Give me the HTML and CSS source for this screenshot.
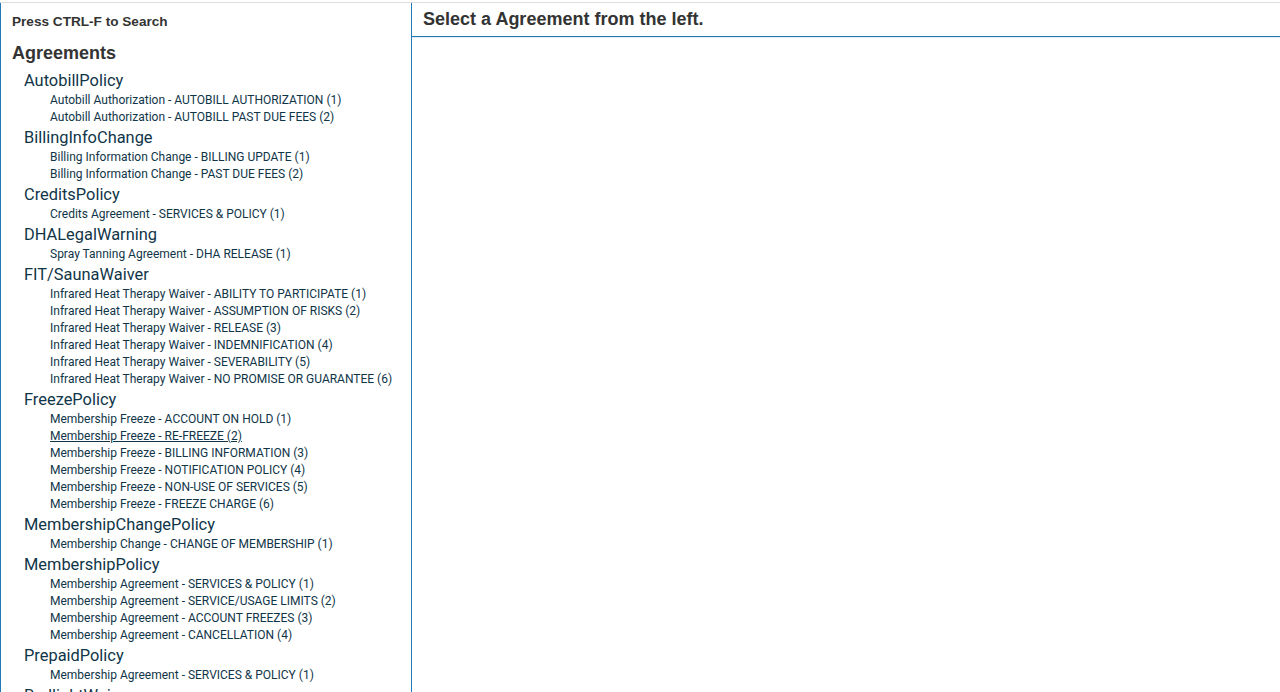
FILE: index.html
```html
<!DOCTYPE html>
<html>
<head>
    <meta charset="UTF-8">
    <title>Agreements</title>
    <link rel="stylesheet" href="styles.css">
</head>
<body>
    <div class="layout">
        <div class="sidebar">
            <div class="search-hint">Press CTRL-F to Search</div>
            <h2 class="list-title">Agreements</h2>

            <div class="group">
                <div class="group-name">AutobillPolicy</div>
                <a class="item" href="#">Autobill Authorization - AUTOBILL AUTHORIZATION (1)</a>
                <a class="item" href="#">Autobill Authorization - AUTOBILL PAST DUE FEES (2)</a>
            </div>
            <div class="group">
                <div class="group-name">BillingInfoChange</div>
                <a class="item" href="#">Billing Information Change - BILLING UPDATE (1)</a>
                <a class="item" href="#">Billing Information Change - PAST DUE FEES (2)</a>
            </div>
            <div class="group">
                <div class="group-name">CreditsPolicy</div>
                <a class="item" href="#">Credits Agreement - SERVICES &amp; POLICY (1)</a>
            </div>
            <div class="group">
                <div class="group-name">DHALegalWarning</div>
                <a class="item" href="#">Spray Tanning Agreement - DHA RELEASE (1)</a>
            </div>
            <div class="group">
                <div class="group-name">FIT/SaunaWaiver</div>
                <a class="item" href="#">Infrared Heat Therapy Waiver - ABILITY TO PARTICIPATE (1)</a>
                <a class="item" href="#">Infrared Heat Therapy Waiver - ASSUMPTION OF RISKS (2)</a>
                <a class="item" href="#">Infrared Heat Therapy Waiver - RELEASE (3)</a>
                <a class="item" href="#">Infrared Heat Therapy Waiver - INDEMNIFICATION (4)</a>
                <a class="item" href="#">Infrared Heat Therapy Waiver - SEVERABILITY (5)</a>
                <a class="item" href="#">Infrared Heat Therapy Waiver - NO PROMISE OR GUARANTEE (6)</a>
            </div>
            <div class="group">
                <div class="group-name">FreezePolicy</div>
                <a class="item" href="#">Membership Freeze - ACCOUNT ON HOLD (1)</a>
                <a class="item hover" href="#">Membership Freeze - RE-FREEZE (2)</a>
                <a class="item" href="#">Membership Freeze - BILLING INFORMATION (3)</a>
                <a class="item" href="#">Membership Freeze - NOTIFICATION POLICY (4)</a>
                <a class="item" href="#">Membership Freeze - NON-USE OF SERVICES (5)</a>
                <a class="item" href="#">Membership Freeze - FREEZE CHARGE (6)</a>
            </div>
            <div class="group">
                <div class="group-name">MembershipChangePolicy</div>
                <a class="item" href="#">Membership Change - CHANGE OF MEMBERSHIP (1)</a>
            </div>
            <div class="group">
                <div class="group-name">MembershipPolicy</div>
                <a class="item" href="#">Membership Agreement - SERVICES &amp; POLICY (1)</a>
                <a class="item" href="#">Membership Agreement - SERVICE/USAGE LIMITS (2)</a>
                <a class="item" href="#">Membership Agreement - ACCOUNT FREEZES (3)</a>
                <a class="item" href="#">Membership Agreement - CANCELLATION (4)</a>
            </div>
            <div class="group">
                <div class="group-name">PrepaidPolicy</div>
                <a class="item" href="#">Membership Agreement - SERVICES &amp; POLICY (1)</a>
            </div>
            <div class="group">
                <div class="group-name">RedlightWaiver</div>
                <a class="item" href="#">Red Light Therapy Waiver - RELEASE (1)</a>
            </div>
        </div>

        <div class="content">
            <div class="content-header">Select a Agreement from the left.</div>
        </div>
    </div>
</body>
</html>
```

FILE: styles.css
```css
html, body {
    margin: 0;
    height: 100%;
    overflow: hidden;
}

body {
    padding-top: 2px;
    box-sizing: border-box;
    background: #fff;
    font-family: "Liberation Sans", Arial, sans-serif;
}

.layout {
    display: flex;
    height: calc(100vh - 2px);
    border-top: 1px solid #dddddd;
}

.sidebar {
    width: 399px;
    flex: none;
    border-left: 1px solid #2279b5;
    border-right: 1px solid #2279b5;
    padding: 9px 0 0 11px;
    overflow: hidden;
}

.search-hint {
    font-size: 13.6px;
    font-weight: bold;
    line-height: 20px;
    color: #333;
}

.list-title {
    margin: 10px 0 5px;
    font-size: 18px;
    font-weight: bold;
    line-height: 22px;
    color: #333;
}

.group {
    padding-left: 12px;
}

.group-name {
    font-family: Roboto, "Noto Sans", sans-serif;
    font-size: 16.4px;
    line-height: 23px;
    color: #103548;
}

.item {
    display: block;
    padding-left: 26px;
    font-family: Roboto, "Noto Sans", sans-serif;
    font-size: 12px;
    line-height: 17px;
    color: #103548;
    text-decoration: none;
}

.item.hover,
.item:hover {
    text-decoration: underline;
}

.content {
    flex: 1;
}

.content-header {
    height: 33px;
    line-height: 33px;
    padding: 0 11px;
    font-size: 18px;
    font-weight: bold;
    color: #333;
    border-bottom: 1px solid #2279b5;
    box-shadow: 0 1px 0 #e4edf4;
}
```
